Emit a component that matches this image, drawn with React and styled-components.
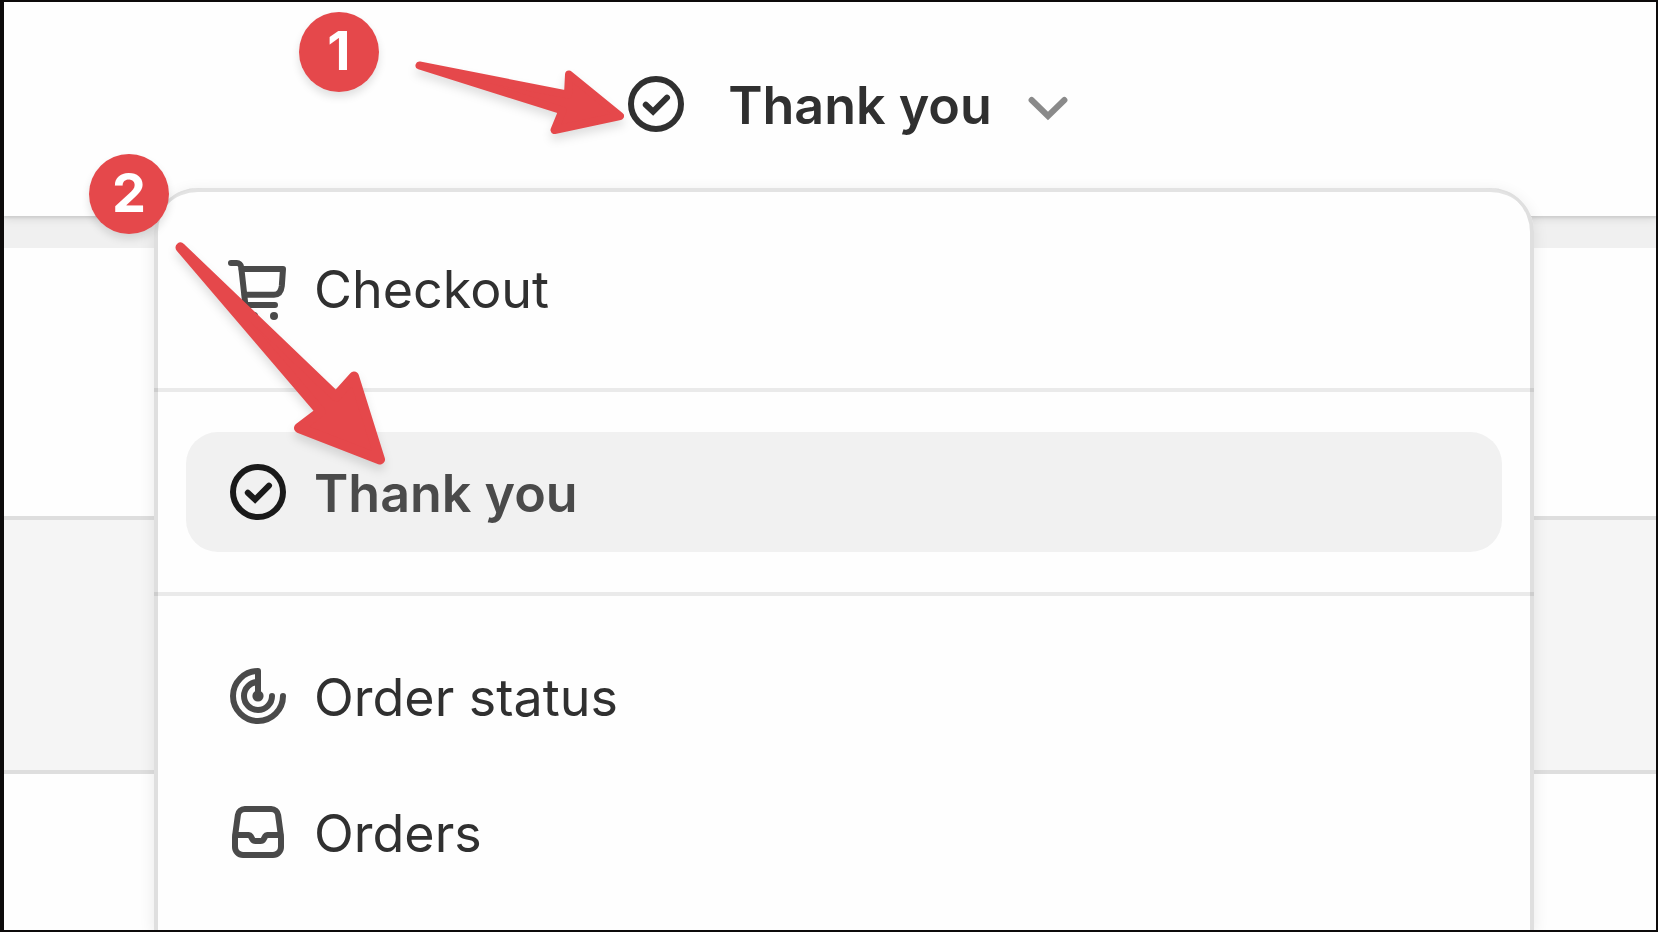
import React from "react";
import styled, { createGlobalStyle } from "styled-components";

const GlobalStyle = createGlobalStyle`
  *, *::before, *::after { box-sizing: border-box; }
  body {
    margin: 0;
    background: #0d0b0b;
    font-family: Inter, "Liberation Sans", sans-serif;
  }
`;

const Frame = styled.div`
  min-height: 100vh;
  padding: 2px 2px 2px 4px;
  display: flex;
`;

const Page = styled.main`
  position: relative;
  flex: 1;
  display: flex;
  flex-direction: column;
  overflow: hidden;
  background: #fefefe;
`;

const TopBar = styled.header`
  position: relative;
  display: flex;
  justify-content: center;
  padding: 62px 0 72px 44px;
  background: #fefefe;
  box-shadow: 0 2px 2px #cfcfcf, 0 4px 8px rgba(0, 0, 0, 0.08);
`;

const PageSelect = styled.button`
  display: flex;
  align-items: center;
  padding: 0;
  border: 0;
  background: none;
  color: #303030;
  font: 630 52px/76px Inter, "Liberation Sans", sans-serif;
  cursor: pointer;
`;

const SelectLabel = styled.span`
  padding: 4px 16px 0 32px;
`;

const Backdrop = styled.div`
  flex: 1;
  display: flex;
  flex-direction: column;
`;

const Band = styled.div`
  height: ${(p) => p.$height}px;
  background: ${(p) => p.$color};
  border-bottom: ${(p) => (p.$line ? "4px solid #dedede" : "0")};
`;

const Menu = styled.nav`
  position: absolute;
  top: 186px;
  bottom: 0;
  left: 150px;
  right: 122px;
  background: #fefefe;
  border-radius: 44px 44px 0 0;
  box-shadow: inset 4px 0 0 #dfdfdf, inset -4px 0 0 #dfdfdf,
    inset 0 4px 0 #e3e3e3, 0 4px 16px rgba(0, 0, 0, 0.09);
`;

const Section = styled.ul`
  list-style: none;
  margin: 0;
  padding: 40px 32px;
  display: flex;
  flex-direction: column;
  gap: 16px;

  & + & {
    border-top: 4px solid rgba(0, 0, 0, 0.08);
  }
`;

const MenuItem = styled.button`
  width: 100%;
  display: flex;
  align-items: center;
  gap: 16px;
  padding: 20px 32px;
  border: 0;
  border-radius: 32px;
  text-align: left;
  background: ${(p) => (p.$active ? "#f1f1f1" : "transparent")};
  color: ${(p) => (p.$active ? "#4a4a4a" : "#303030")};
  font: ${(p) => (p.$active ? 575 : 400)} 52px/76px Inter, "Liberation Sans", sans-serif;
  cursor: pointer;

  svg { color: ${(p) => (p.$active ? "#1a1a1a" : "#4a4a4a")}; }
`;

const ItemLabel = styled.span`
  padding-top: 4px;
`;

const Icon = styled.svg.attrs({ viewBox: "0 0 20 20", "aria-hidden": true })`
  flex: none;
  width: 80px;
  height: 80px;
  fill: none;
  stroke: currentColor;
  stroke-width: 1.5;
  stroke-linecap: round;
  stroke-linejoin: ${(p) => p.$join || "round"};
`;

const Chevron = styled(Icon)`
  color: #8a8a8a;
`;

const Badge = styled.span`
  position: absolute;
  top: ${(p) => p.$y}px;
  left: ${(p) => p.$x}px;
  width: 80px;
  height: 80px;
  border-radius: 50%;
  background: #e5484b;
  color: #fff;
  text-align: center;
  font-size: 54px;
  font-weight: 700;
  line-height: 78px;
  box-shadow: 0 5px 8px rgba(0, 0, 0, 0.12);
`;

const Arrow = styled.svg.attrs({ "aria-hidden": true })`
  position: absolute;
  top: ${(p) => p.$y}px;
  left: ${(p) => p.$x}px;
  overflow: visible;
  fill: #e5484b;
  stroke: #e5484b;
  stroke-linejoin: round;
  pointer-events: none;
  filter: drop-shadow(0 6px 5px rgba(0, 0, 0, 0.12));
`;

const CheckIcon = () => (
  <Icon $join="miter">
    <circle cx="10" cy="10" r="6.25" />
    <path d="M7.45 10.2 9.27 11.9 12.75 8.4" />
  </Icon>
);

const CartIcon = () => (
  <Icon>
    <path d="M3.25 3.75H4.7A1.1 1.1 0 0 1 5.8 4.75L6.85 14.25H14.25" />
    <path d="M5.9 5.25H16.25L15.95 9.5C15.8 10.9 15.1 11.7 14 11.7H6.7" />
    <g fill="currentColor" stroke="none">
      <circle cx="9" cy="17" r="1" />
      <circle cx="14" cy="17" r="1" />
    </g>
  </Icon>
);

const StatusIcon = () => (
  <Icon>
    <path d="M10 10V3.75A6.25 6.25 0 1 0 16.25 10" />
    <path d="M10 6.5A3.5 3.5 0 1 0 13.5 10" />
    <circle cx="10" cy="10" r="1.4" fill="currentColor" stroke="none" />
  </Icon>
);

const OrdersIcon = () => (
  <Icon>
    <path d="M6.7 4.25H13.3A1.75 1.75 0 0 1 15.03 5.8L15.7 10.7Q15.75 11.1 15.75 11.5V13.75A2 2 0 0 1 13.75 15.75H6.25A2 2 0 0 1 4.25 13.75V11.5Q4.25 11.1 4.3 10.7L4.97 5.8A1.75 1.75 0 0 1 6.7 4.25Z" />
    <path d="M4.4 10.75H7.7A.5.5 0 0 1 8.15 11L8.6 11.8A.9.9 0 0 0 9.4 12.25H10.6A.9.9 0 0 0 11.4 11.8L11.85 11A.5.5 0 0 1 12.3 10.75H15.6" />
  </Icon>
);

const sections = [
  [{ label: "Checkout", Glyph: CartIcon }],
  [{ label: "Thank you", Glyph: CheckIcon, active: true }],
  [
    { label: "Order status", Glyph: StatusIcon },
    { label: "Orders", Glyph: OrdersIcon },
  ],
];

export default function App() {
  return (
    <Frame>
      <GlobalStyle />
      <Page>
        <TopBar>
          <PageSelect type="button" aria-expanded="true">
            <CheckIcon />
            <SelectLabel>Thank you</SelectLabel>
            <Chevron $join="miter">
              <path d="M5.9 9 10 13 14.1 9" />
            </Chevron>
          </PageSelect>
        </TopBar>
        <Backdrop>
          <Band $height={32} $color="#f0f0f0" />
          <Band $height={272} $color="#fefefe" $line />
          <Band $height={254} $color="#f5f5f5" $line />
        </Backdrop>
        <Menu aria-label="Pages">
          {sections.map((items) => (
            <Section key={items[0].label}>
              {items.map(({ label, Glyph, active }) => (
                <li key={label}>
                  <MenuItem type="button" $active={active}>
                    <Glyph />
                    <ItemLabel>{label}</ItemLabel>
                  </MenuItem>
                </li>
              ))}
            </Section>
          ))}
        </Menu>
        <Badge $x={295} $y={10}>1</Badge>
        <Arrow $x={412} $y={59} width="210" height="80" strokeWidth="8">
          <path d="M3.5 4.5 152 33.7 153 13.5 204 55 138.5 69 146.5 49.5Z" />
        </Arrow>
        <Badge $x={85} $y={152}>2</Badge>
        <Arrow $x={170} $y={239} width="220" height="230" strokeWidth="10">
          <path d="M6.5 6.5 162 155.5 180 135.5 206 218.5 125 187 146.7 170.5Z" />
        </Arrow>
      </Page>
    </Frame>
  );
}
